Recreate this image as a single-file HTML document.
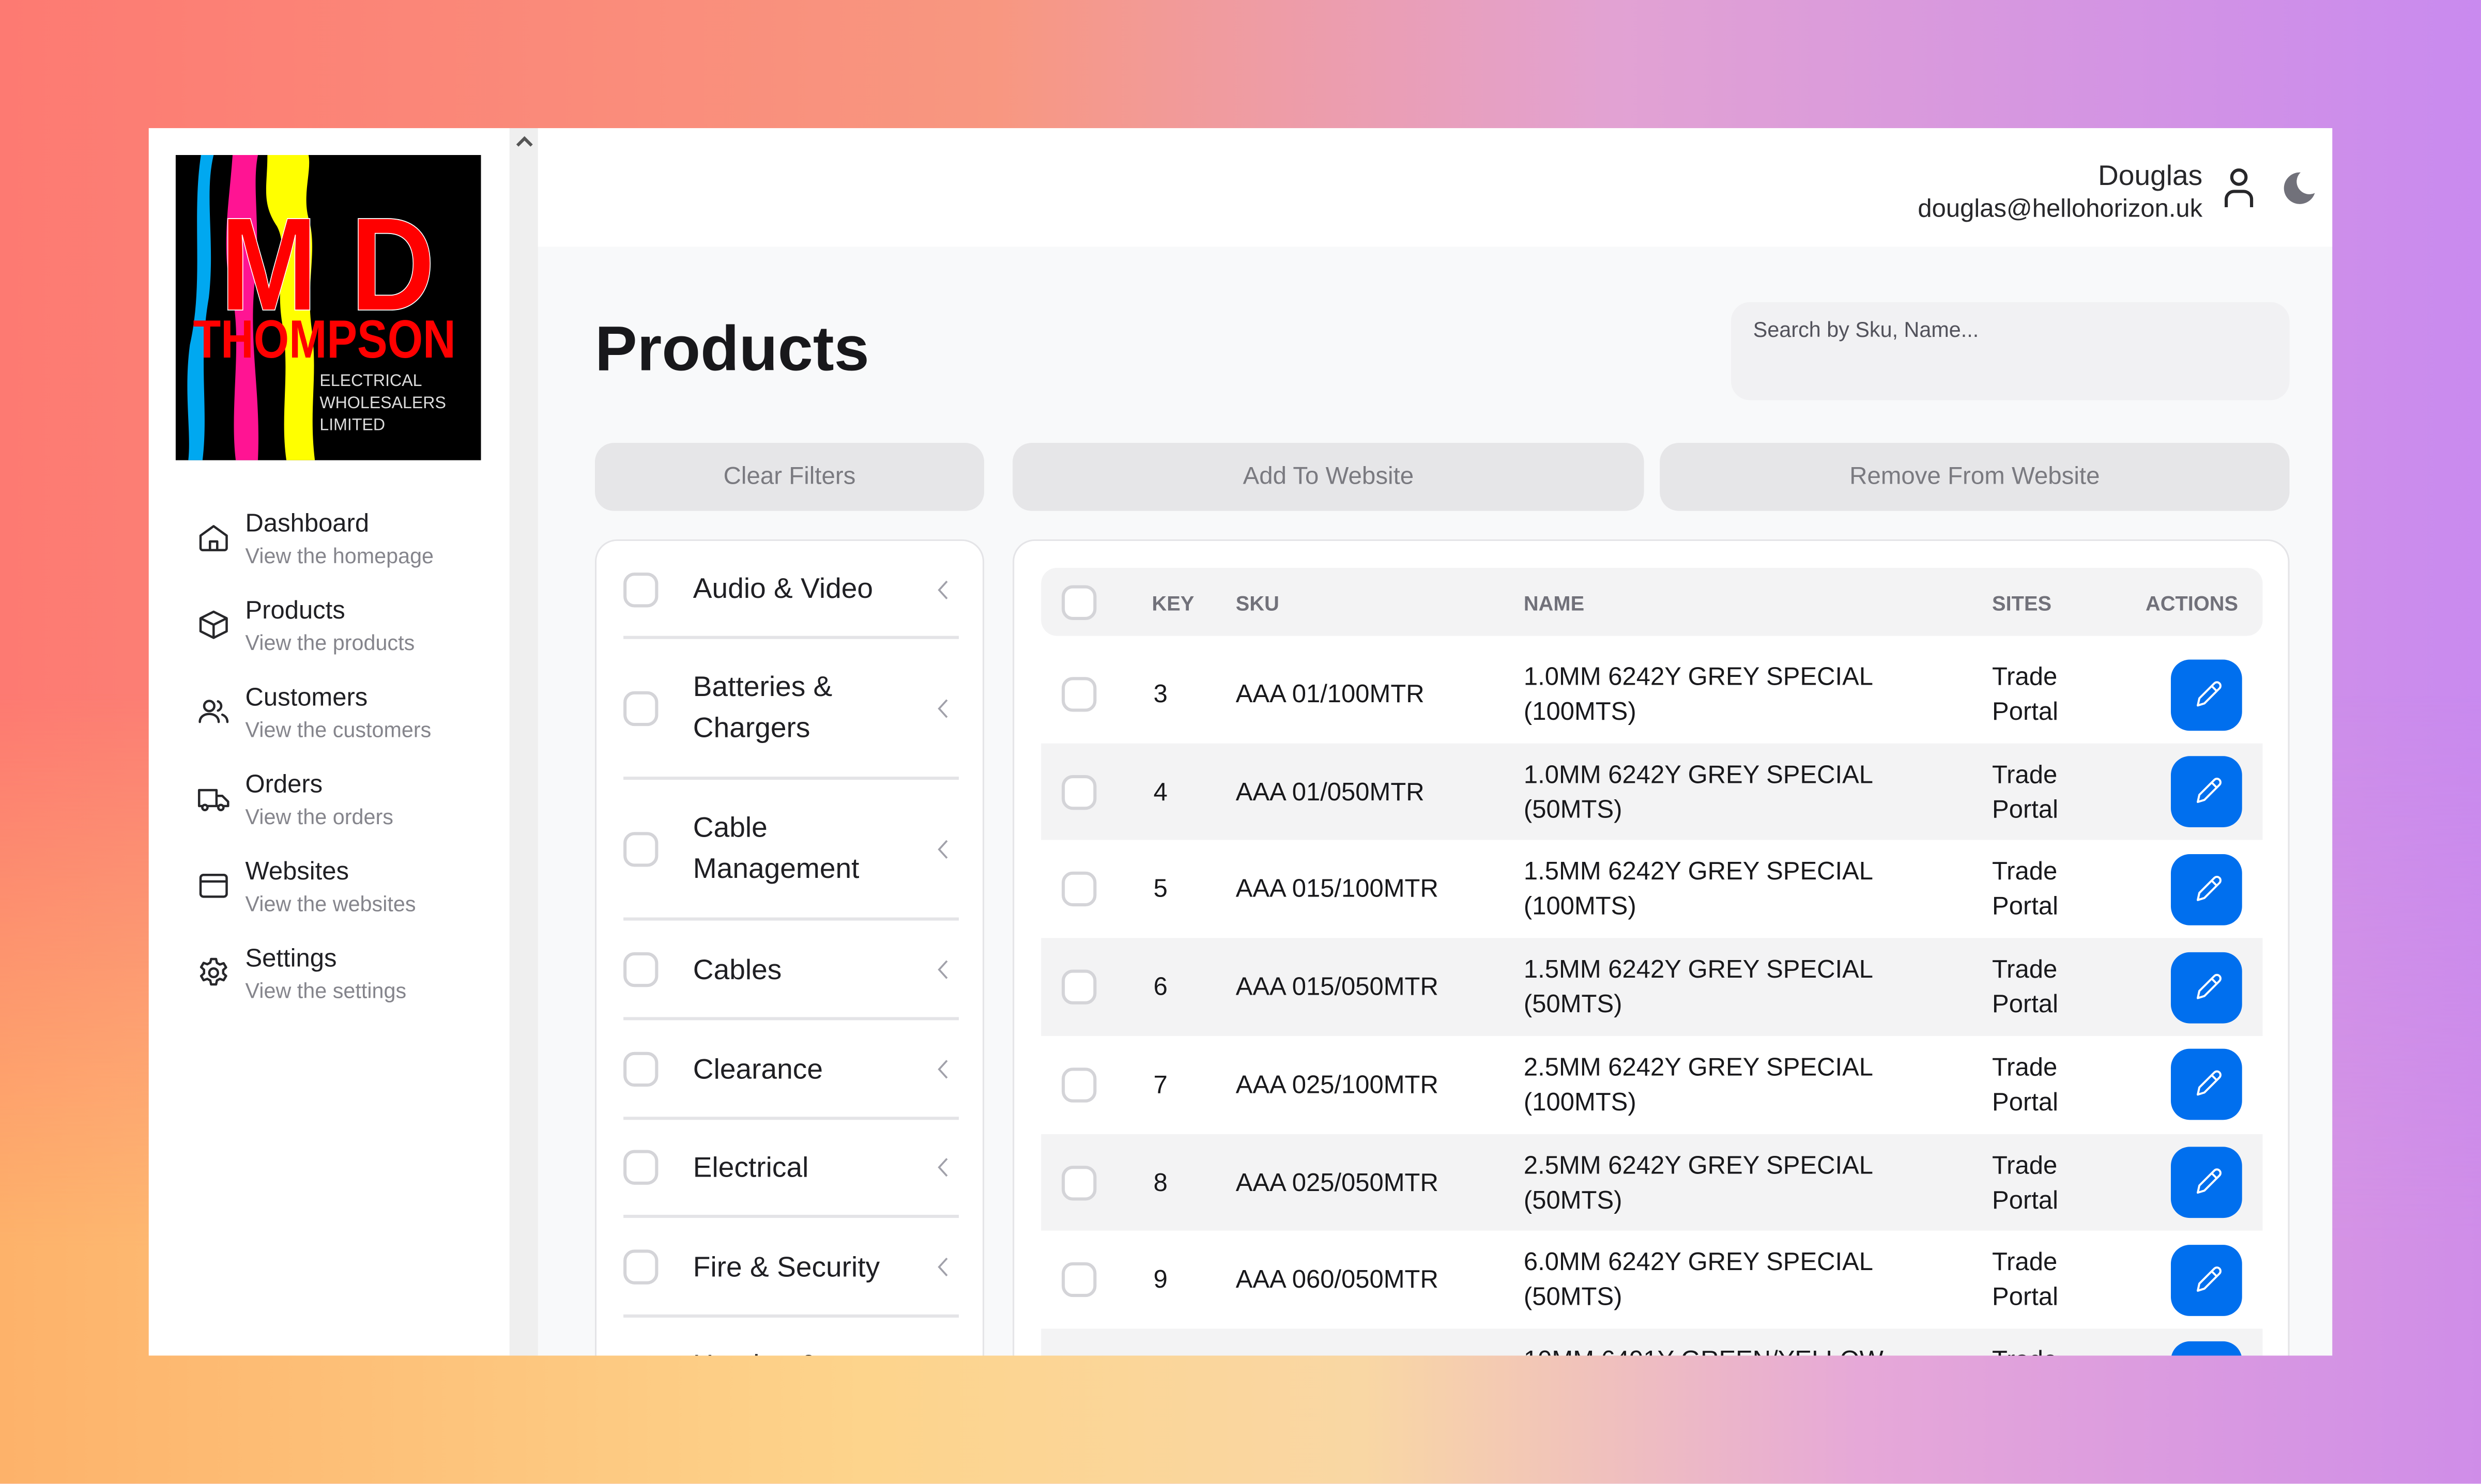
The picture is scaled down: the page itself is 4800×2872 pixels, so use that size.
<!DOCTYPE html>
<html><head><meta charset="utf-8">
<style>
*{margin:0;padding:0;box-sizing:border-box}
html,body{width:4800px;height:2872px;overflow:hidden}
body{font-family:"Liberation Sans",Arial,sans-serif;color:#18181b}
#s{position:absolute;left:0;top:0;width:1568px;height:938px;transform:scale(3.0612);transform-origin:0 0;
background:linear-gradient(90deg,#fd7a72 0%,#f89780 40%,#e2a2d3 65%,#c98aef 100%);overflow:hidden}
#s:before{content:"";position:absolute;left:0;right:0;bottom:0;height:500px;
background:linear-gradient(90deg,#fdb26a 0%,#fdd48c 35%,#f9d7a4 55%,#e6a8d8 75%,#cf8de8 100%);
-webkit-mask:linear-gradient(180deg,transparent,#000 70%);mask:linear-gradient(180deg,transparent,#000 70%)}
.a{position:absolute}
#win{left:94px;top:81px;width:1380px;height:776px;background:#fff;overflow:hidden}
#sb{left:228px;top:0;width:19px;height:776px;background:#efefef}
#main{left:246px;top:0;width:1134px;height:776px;background:#f8f9fa}
#hdr{left:0;top:0;width:1134px;height:75px;background:#fff}
.nav{position:absolute;left:30px}
.nav svg{position:absolute;left:0;top:6px}
.nav .t{position:absolute;left:31px;top:0;font-size:16px;color:#1f1f23;white-space:nowrap}
.nav .st{position:absolute;left:31px;top:21px;font-size:13.5px;color:#85858c;white-space:nowrap}
.btn{position:absolute;top:199px;height:43px;background:#e6e6e8;border-radius:12px;color:#7a7a80;font-size:15.5px;text-align:center;line-height:43px}
.panel{position:absolute;background:#fff;border:1.5px solid #e4e4e7;border-radius:14px}
.cb{position:absolute;width:22px;height:22px;border:2px solid #d4d4d8;border-radius:7px;background:#fff}
.cat{position:absolute;left:61px;font-size:18px;color:#1f1f23;line-height:26px}
.chev{position:absolute;left:215px}
.sep{position:absolute;left:17px;width:212px;height:1.5px;background:#e4e4e7}
.row{position:absolute;left:17px;width:772px;height:62px}
.row .k{position:absolute;left:71px;font-size:16px}
.row .sku{position:absolute;left:123px;font-size:16px}
.row .nm{position:absolute;left:305px;font-size:16px;line-height:22px}
.row .si{position:absolute;left:601px;font-size:16px;line-height:22px}
.row .eb{position:absolute;left:714px;width:45px;height:45px;border-radius:12px;background:#006fee}
.th{position:absolute;top:34px;font-size:13px;font-weight:bold;color:#71717a}
</style></head><body><div id="s">
<div id="win" class="a">
  <svg class="a" style="left:17px;top:17px" width="193" height="193" viewBox="0 0 193 193">
    <rect width="193" height="193" fill="#000"/>
    <path d="M16 0 C10 40 18 80 9 120 C5 150 10 175 8 193 L17 193 C21 160 14 130 21 90 C25 55 18 25 24 0Z" fill="#00a8f0"/>
    <path d="M36 0 C34 30 28 60 36 90 C42 120 34 160 38 193 L52 193 C54 150 46 120 50 80 C54 45 48 20 52 0Z" fill="#ff1493"/>
    <path d="M58 0 C58 20 54 30 64 45 C72 60 62 80 68 110 C72 140 66 165 70 193 L88 193 C84 160 90 140 86 110 C82 80 90 60 84 40 C80 25 86 10 84 0Z" fill="#ffff00"/>
    <text x="96" y="98" text-anchor="middle" font-family="Liberation Sans" font-weight="bold" font-size="84" fill="#f00" stroke="#fff" stroke-width="0.6" textLength="136" lengthAdjust="spacingAndGlyphs">M D</text>
    <text x="94" y="128" text-anchor="middle" font-family="Liberation Sans" font-weight="bold" font-size="34" fill="#f00" textLength="166" lengthAdjust="spacingAndGlyphs">THOMPSON</text>
    <text x="91" y="146" font-family="Liberation Sans" font-size="10.5" fill="#ddd">ELECTRICAL</text>
    <text x="91" y="160" font-family="Liberation Sans" font-size="10.5" fill="#ddd">WHOLESALERS</text>
    <text x="91" y="174" font-family="Liberation Sans" font-size="10.5" fill="#ddd">LIMITED</text>
  </svg>
  <div class="nav" style="top:242px"><svg width="22" height="22" viewBox="0 0 24 24" fill="none" stroke="#27272a" stroke-width="1.6" stroke-linejoin="round"><path d="M3 10.5 12 4l9 6.5V19a1.5 1.5 0 0 1-1.5 1.5h-15A1.5 1.5 0 0 1 3 19z"/><path d="M9.5 20.5v-6h5v6"/></svg><div class="t">Dashboard</div><div class="st">View the homepage</div></div>
  <div class="nav" style="top:297px"><svg width="22" height="22" viewBox="0 0 24 24" fill="none" stroke="#27272a" stroke-width="1.6" stroke-linejoin="round"><path d="M12 3 21 7.5v9L12 21 3 16.5v-9z"/><path d="M3 7.5 12 12l9-4.5M12 12v9"/></svg><div class="t">Products</div><div class="st">View the products</div></div>
  <div class="nav" style="top:352px"><svg width="22" height="22" viewBox="0 0 24 24" fill="none" stroke="#27272a" stroke-width="1.6" stroke-linecap="round"><circle cx="9" cy="8" r="3.5"/><path d="M2.5 19c0-3.5 3-5.5 6.5-5.5s6.5 2 6.5 5.5"/><path d="M15 4.8a3.4 3.4 0 0 1 0 6.4M18 14c2 .8 3.5 2.5 3.5 5"/></svg><div class="t">Customers</div><div class="st">View the customers</div></div>
  <div class="nav" style="top:407px"><svg width="22" height="22" viewBox="0 0 24 24" fill="none" stroke="#27272a" stroke-width="1.6" stroke-linejoin="round"><path d="M2 6h12v11H2zM14 10h4l4 4v3h-8z"/><circle cx="6" cy="18" r="1.8" fill="#fff"/><circle cx="17" cy="18" r="1.8" fill="#fff"/></svg><div class="t">Orders</div><div class="st">View the orders</div></div>
  <div class="nav" style="top:462px"><svg width="22" height="22" viewBox="0 0 24 24" fill="none" stroke="#27272a" stroke-width="1.6"><rect x="3" y="4.5" width="18" height="15" rx="2"/><path d="M3 9h18"/></svg><div class="t">Websites</div><div class="st">View the websites</div></div>
  <div class="nav" style="top:517px"><svg width="22" height="22" viewBox="0 0 24 24" fill="none" stroke="#27272a" stroke-width="1.6" stroke-linejoin="round"><path d="M10.3 2.5h3.4l.6 2.7 2 1.1 2.6-.9 1.7 2.9-2 1.8v2.3l2 1.8-1.7 2.9-2.6-.9-2 1.1-.6 2.7h-3.4l-.6-2.7-2-1.1-2.6.9-1.700-2.9 2-1.8V9.9l-2-1.8 1.7-2.9 2.6.9 2-1.1z"/><circle cx="12" cy="12" r="3"/></svg><div class="t">Settings</div><div class="st">View the settings</div></div>

  <div id="sb" class="a"><svg class="a" style="left:3px;top:4px" width="13" height="9" viewBox="0 0 13 9"><path d="M2 7 6.5 2.5 11 7" fill="none" stroke="#555" stroke-width="2"/></svg></div>

  <div id="main" class="a">
    <div id="hdr" class="a">
      <div class="a" style="right:82px;top:20px;font-size:18px;color:#27272a;text-align:right">Douglas</div>
      <div class="a" style="right:82px;top:43px;font-size:16px;color:#27272a;text-align:right">douglas@hellohorizon.uk</div>
      <svg class="a" style="left:1064px;top:24px" width="22" height="28" viewBox="0 0 22 28" fill="none" stroke="#27272a" stroke-width="2"><circle cx="11" cy="7" r="4.5"/><path d="M3 26v-5a5 5 0 0 1 5-5h6a5 5 0 0 1 5 5v5"/></svg>
      <svg class="a" style="left:1100px;top:26px" width="24" height="24" viewBox="0 0 24 24"><path d="M14 2a10 10 0 1 0 9 13A8 8 0 0 1 14 2z" fill="#71717a"/></svg>
    </div>
    <div class="a" style="left:36px;top:118px;font-size:40px;font-weight:bold;color:#18181b">Products</div>
    <div class="a" style="left:754px;top:110px;width:353px;height:62px;background:#f1f1f3;border-radius:12px"><div class="a" style="left:14px;top:10px;font-size:13.5px;color:#52525b">Search by Sku, Name...</div></div>
    <div class="btn" style="left:36px;width:246px">Clear Filters</div>
    <div class="btn" style="left:300px;width:399px">Add To Website</div>
    <div class="btn" style="left:709px;width:398px">Remove From Website</div>

    <div class="panel" style="left:36px;top:260px;width:246px;height:560px">
      <div class="cb" style="left:17px;top:20px"></div><div class="cat" style="top:17px">Audio &amp; Video</div>
      <div class="sep" style="top:60px"></div>
      <div class="cb" style="left:17px;top:95px"></div><div class="cat" style="top:79px">Batteries &amp;<br>Chargers</div>
      <div class="sep" style="top:149px"></div>
      <div class="cb" style="left:17px;top:184px"></div><div class="cat" style="top:168px">Cable<br>Management</div>
      <div class="sep" style="top:238px"></div>
      <div class="cb" style="left:17px;top:260px"></div><div class="cat" style="top:258px">Cables</div>
      <div class="sep" style="top:301px"></div>
      <div class="cb" style="left:17px;top:323px"></div><div class="cat" style="top:321px">Clearance</div>
      <div class="sep" style="top:364px"></div>
      <div class="cb" style="left:17px;top:385px"></div><div class="cat" style="top:383px">Electrical</div>
      <div class="sep" style="top:426px"></div>
      <div class="cb" style="left:17px;top:448px"></div><div class="cat" style="top:446px">Fire &amp; Security</div>
      <div class="sep" style="top:489px"></div>
      <div class="cat" style="top:508px">Heating &amp;</div>
      <svg class="chev" style="top:24px" width="8" height="14" viewBox="0 0 8 14"><path d="M6.5 1.5 1.5 7l5 5.5" fill="none" stroke="#a1a1aa" stroke-width="1.2"/></svg>
      <svg class="chev" style="top:99px" width="8" height="14" viewBox="0 0 8 14"><path d="M6.5 1.5 1.5 7l5 5.5" fill="none" stroke="#a1a1aa" stroke-width="1.2"/></svg>
      <svg class="chev" style="top:188px" width="8" height="14" viewBox="0 0 8 14"><path d="M6.5 1.5 1.5 7l5 5.5" fill="none" stroke="#a1a1aa" stroke-width="1.2"/></svg>
      <svg class="chev" style="top:264px" width="8" height="14" viewBox="0 0 8 14"><path d="M6.5 1.5 1.5 7l5 5.5" fill="none" stroke="#a1a1aa" stroke-width="1.2"/></svg>
      <svg class="chev" style="top:327px" width="8" height="14" viewBox="0 0 8 14"><path d="M6.5 1.5 1.5 7l5 5.5" fill="none" stroke="#a1a1aa" stroke-width="1.2"/></svg>
      <svg class="chev" style="top:389px" width="8" height="14" viewBox="0 0 8 14"><path d="M6.5 1.5 1.5 7l5 5.5" fill="none" stroke="#a1a1aa" stroke-width="1.2"/></svg>
      <svg class="chev" style="top:452px" width="8" height="14" viewBox="0 0 8 14"><path d="M6.5 1.5 1.5 7l5 5.5" fill="none" stroke="#a1a1aa" stroke-width="1.2"/></svg>
    </div>

    <div class="panel" style="left:300px;top:260px;width:807px;height:560px;overflow:hidden">
      <div class="a" style="left:17px;top:17px;width:772px;height:43px;background:#f3f3f4;border-radius:10px"></div>
      <div class="cb" style="left:30px;top:28px"></div>
      <div class="th" style="left:87px;top:32px">KEY</div>
      <div class="th" style="left:140px;top:32px">SKU</div>
      <div class="th" style="left:322px;top:32px">NAME</div>
      <div class="th" style="left:618px;top:32px">SITES</div>
      <div class="th" style="left:715px;top:32px">ACTIONS</div>
      <div id="rows"></div>
    </div>
  </div>
</div>
</div>
<script>
var d=[["3","AAA 01/100MTR","1.0MM 6242Y GREY SPECIAL","(100MTS)"],["4","AAA 01/050MTR","1.0MM 6242Y GREY SPECIAL","(50MTS)"],["5","AAA 015/100MTR","1.5MM 6242Y GREY SPECIAL","(100MTS)"],["6","AAA 015/050MTR","1.5MM 6242Y GREY SPECIAL","(50MTS)"],["7","AAA 025/100MTR","2.5MM 6242Y GREY SPECIAL","(100MTS)"],["8","AAA 025/050MTR","2.5MM 6242Y GREY SPECIAL","(50MTS)"],["9","AAA 060/050MTR","6.0MM 6242Y GREY SPECIAL","(50MTS)"],["10","AAA 100/050MTR","10MM 6491Y GREEN/YELLOW","(50MTS)"]];
var h="";
for(var i=0;i<d.length;i++){var t=66+i*61.7;var bg=i%2?"#f3f3f4":"#fff";
h+='<div class="row" style="top:'+t+'px;background:'+bg+'">'+
'<div class="cb" style="left:13px;top:20px"></div>'+
'<div class="k" style="top:23px">'+d[i][0]+'</div>'+
'<div class="sku" style="top:23px">'+d[i][1]+'</div>'+
'<div class="nm" style="top:10px">'+d[i][2]+'<br>'+d[i][3]+'</div>'+
'<div class="si" style="top:10px">Trade<br>Portal</div>'+
'<div class="eb" style="top:8.5px"><svg width="45" height="45" viewBox="0 0 45 45"><path d="M17 29l1-4.5 9.5-9.5a2.2 2.2 0 0 1 3.2 3.2L21.2 27.7z M25.8 16.7l3 3" fill="none" stroke="#fff" stroke-width="1.3" stroke-linejoin="round"/></svg></div>'+
'</div>';}
document.getElementById("rows").innerHTML=h;
</script>
</body></html>
